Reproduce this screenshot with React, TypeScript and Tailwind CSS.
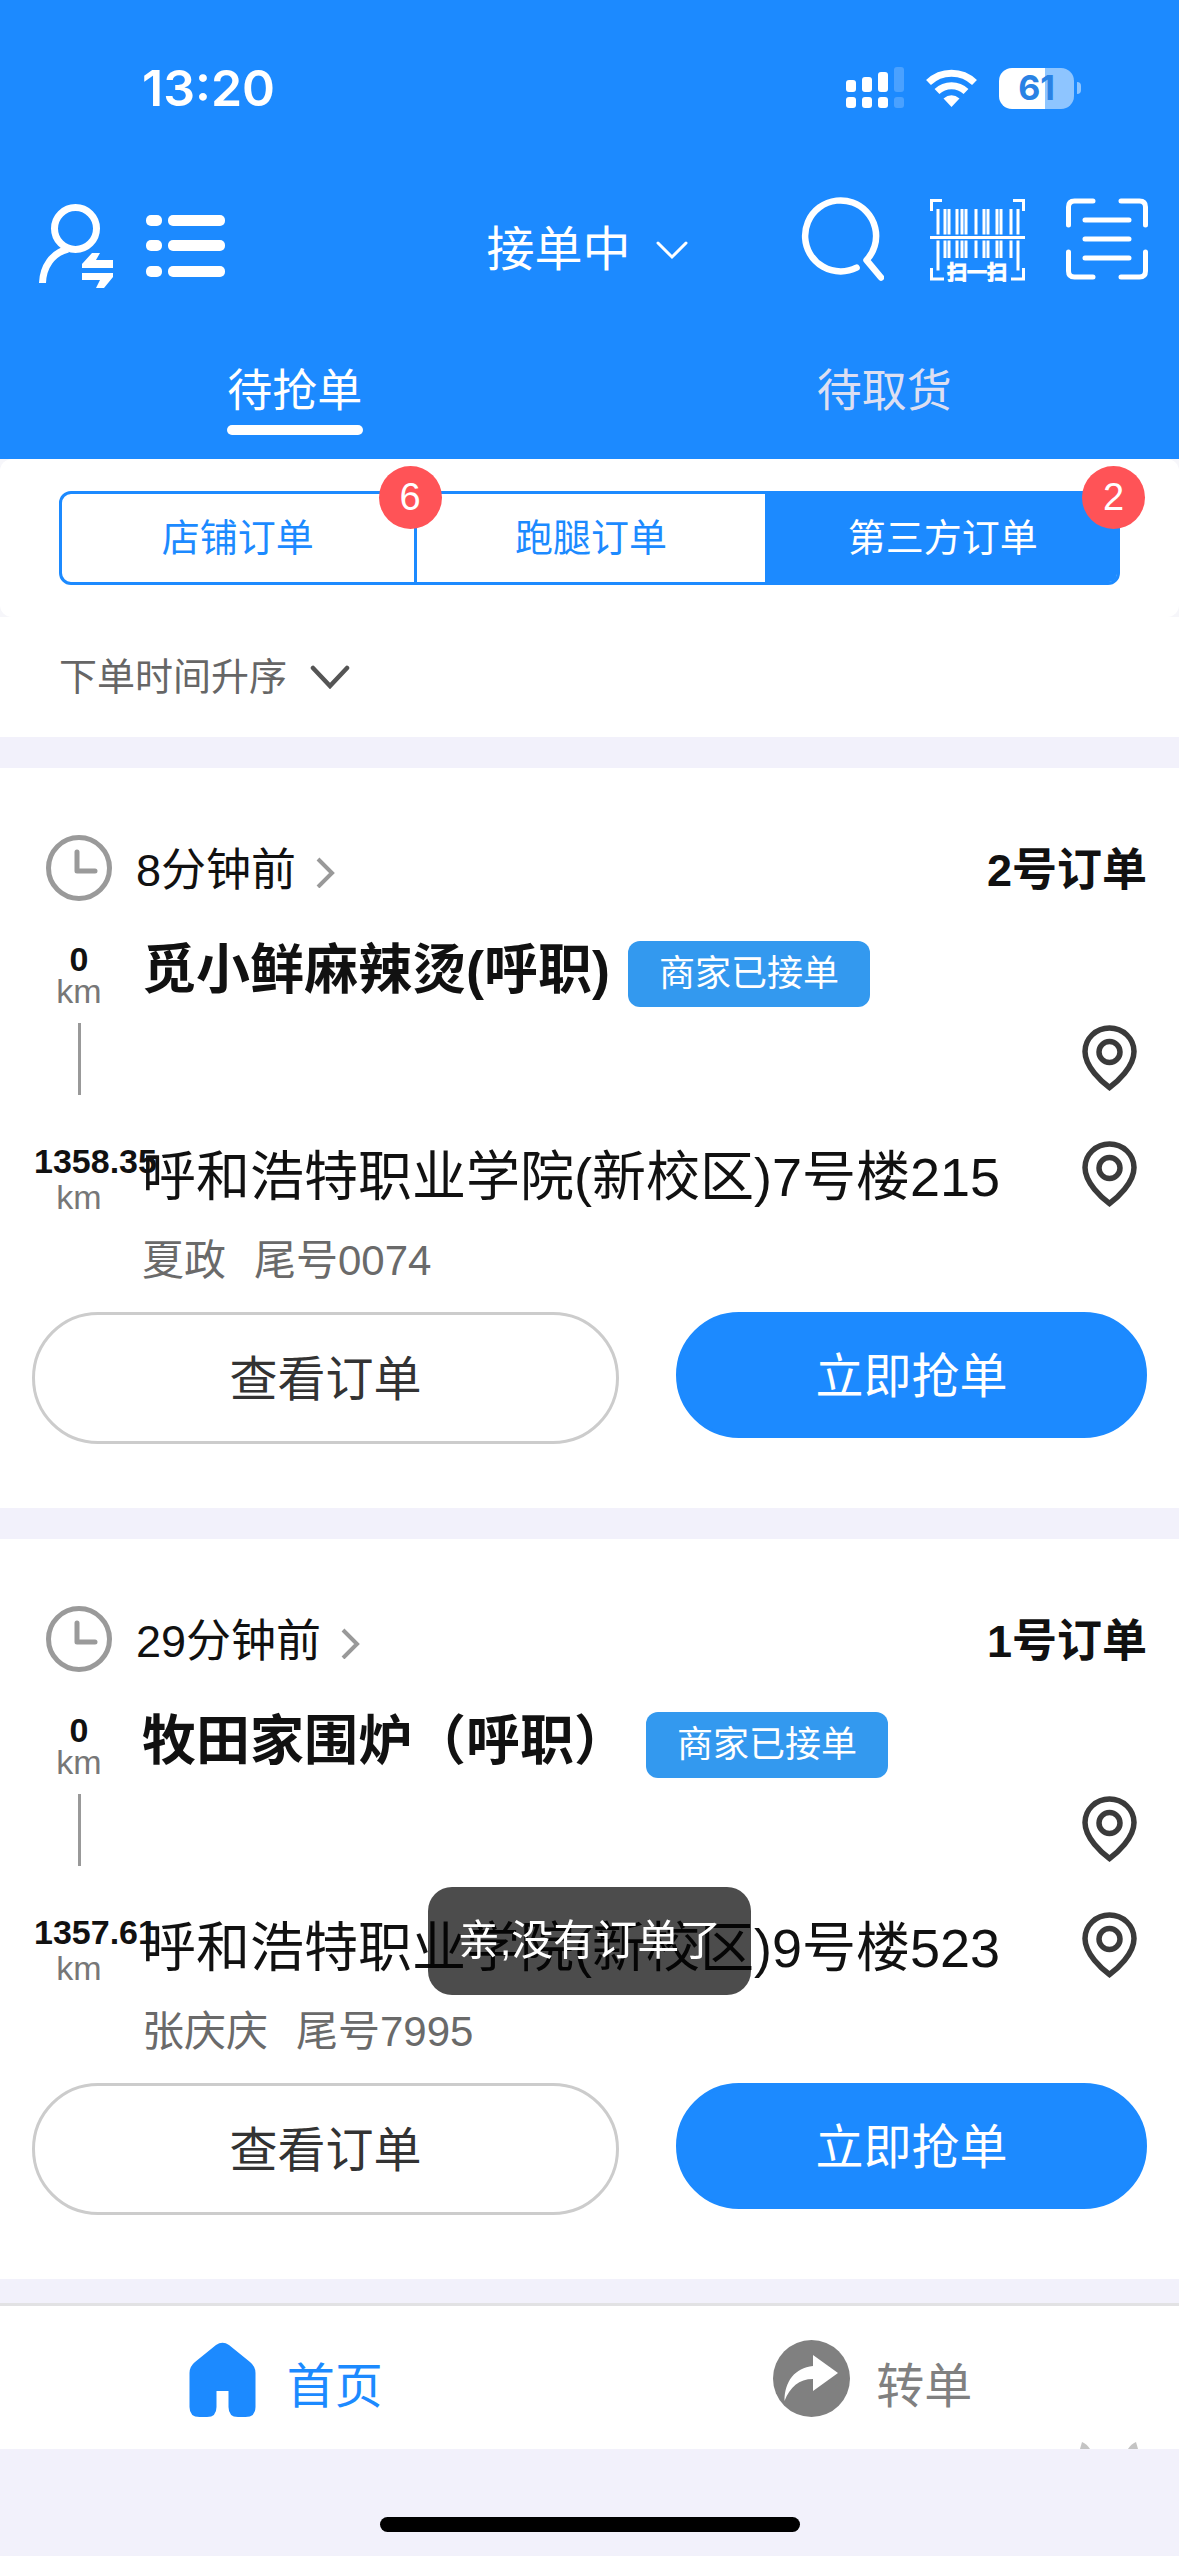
import { useState } from 'react';

const TABS = ['待抢单', '待取货'];

const CATEGORIES = [
    { label: '店铺订单', count: 6 },
    { label: '跑腿订单', count: 0 },
    { label: '第三方订单', count: 2 },
];

const ORDERS = [
    {
        id: 2,
        time: '8分钟前',
        shop: '觅小鲜麻辣烫(呼职)',
        status: '商家已接单',
        shopDistance: '0',
        distance: '1358.35',
        address: '呼和浩特职业学院(新校区)7号楼215',
        customer: '夏政',
        phone: '尾号0074',
    },
    {
        id: 1,
        time: '29分钟前',
        shop: '牧田家围炉（呼职）',
        status: '商家已接单',
        shopDistance: '0',
        distance: '1357.61',
        address: '呼和浩特职业学院(新校区)9号楼523',
        customer: '张庆庆',
        phone: '尾号7995',
    },
];

// x positions of the bars between the two outer ones
const BARCODE = [15, 19, 27, 32, 36, 46, 54, 58, 67, 71, 81];

function StatusBar() {
    return (
        <div className="flex h-44 items-center justify-between pl-[142px] pr-[98px]">
            <span className="font-[Inter] text-[50px] font-semibold leading-none">13:20</span>
            <div className="flex items-center gap-[22px]">
                <svg className="h-[42px] w-[58px]" viewBox="0 0 58 42" fill="currentColor">
                    <rect x="0" y="13" width="10" height="12" rx="3" />
                    <rect x="16" y="10" width="10" height="15" rx="3" />
                    <rect x="32" y="5" width="10" height="20" rx="3" />
                    <rect x="0" y="30" width="10" height="11" rx="3" />
                    <rect x="16" y="30" width="10" height="11" rx="3" />
                    <rect x="32" y="30" width="10" height="11" rx="3" />
                    <g opacity="0.2">
                        <rect x="48" y="0" width="10" height="25" rx="3" />
                        <rect x="48" y="30" width="10" height="11" rx="3" />
                    </g>
                </svg>
                <svg className="h-[38px] w-[51px]" viewBox="0 0 51 38" fill="none" stroke="currentColor" strokeWidth="7">
                    <path d="M2.5 13.5a33 33 0 0 1 46 0" />
                    <path d="M11 22.5a21 21 0 0 1 29 0" />
                    <path d="M25.5 38l-8-8.500q8-6.500 16 0z" fill="currentColor" stroke="none" />
                </svg>
                <div className="flex items-center gap-[3px]">
                    <div className="flex h-[41px] w-[75px] items-center justify-center rounded-[13px] bg-linear-to-r from-white from-62% to-[#8ec5ff] to-62%">
                        <span className="font-[Inter] text-[34px] font-bold leading-none text-[#2a82e4]">61</span>
                    </div>
                    <div className="h-3 w-1 rounded-r-full bg-[#8ec5ff]" />
                </div>
            </div>
        </div>
    );
}

function BarcodeIcon() {
    return (
        <svg className="h-[86px] w-[95px]" viewBox="0 0 95 86" fill="none" stroke="currentColor" strokeWidth="3">
            <path d="M1.500 15V4.500H12M83 4.500H93.500V15M1.500 72V83H14M81 83H93.500V72" />
            <path d="M0 41.500H95" />
            <path d="M8 13V38.500M88 13V38.500M8 44.500V74.500M88 44.500V74.500" />
            {BARCODE.map((x) => (
                <path key={x} d={`M${x} 13V38.500M${x} 44.500V62`} />
            ))}
            <text x="47" y="84" textAnchor="middle" className="fill-white text-[20px] font-bold" strokeWidth="1">
                扫一扫
            </text>
        </svg>
    );
}

function Header() {
    const [tab, setTab] = useState(0);

    return (
        <header className="bg-[#1c8aff] text-white">
            <StatusBar />

            <div className="grid h-36 grid-cols-[1fr_auto_1fr] items-center pl-[38px] pr-[31px]">
                <div className="flex items-center gap-8 pb-1">
                    <button aria-label="切换账号">
                        <svg className="h-[84px] w-[76px]" viewBox="0 0 76 84" fill="none" stroke="currentColor" strokeWidth="7">
                            <ellipse cx="37.500" cy="24.500" rx="21" ry="21" />
                            <path d="M30 45C14 49 5 63 4.500 79" />
                            <path d="M54 49h8l-4 7h17v8H44v-4zM44 69h31v4L66 84h-8l4-8H44z" fill="currentColor" stroke="none" />
                        </svg>
                    </button>
                    <button aria-label="列表">
                        <svg className="h-[62px] w-[79px]" viewBox="0 0 79 62" fill="currentColor">
                            <rect x="0" y="0" width="16" height="11" rx="5" />
                            <rect x="22" y="0" width="57" height="11" rx="5" />
                            <rect x="0" y="25" width="16" height="11" rx="5" />
                            <rect x="22" y="25" width="57" height="11" rx="5" />
                            <rect x="0" y="51" width="16" height="11" rx="5" />
                            <rect x="22" y="51" width="57" height="11" rx="5" />
                        </svg>
                    </button>
                </div>

                <label className="relative mr-3 mt-1 flex items-center">
                    <select aria-label="接单状态" className="h-16 appearance-none bg-transparent pr-14 text-[48px] leading-[64px] outline-none">
                        <option>接单中</option>
                        <option>休息中</option>
                    </select>
                    <svg className="pointer-events-none absolute right-0 h-5 w-8" viewBox="0 0 32 20" fill="none" stroke="currentColor" strokeWidth="3" strokeLinecap="round">
                        <path d="M2 3l14 14L30 3" />
                    </svg>
                </label>

                <div className="flex items-center justify-end pb-[18px]">
                    <button aria-label="搜索" className="mr-[46px]">
                        <svg className="h-[84px] w-[83px]" viewBox="0 0 83 84" fill="none" stroke="currentColor" strokeWidth="6.500" strokeLinecap="round" strokeLinejoin="round">
                            <path d="M55.600 70.600A35.500 35.500 0 1 1 65.500 63.200L80 80.500" />
                        </svg>
                    </button>
                    <button aria-label="扫一扫" className="mr-[41px]">
                        <BarcodeIcon />
                    </button>
                    <button aria-label="扫描">
                        <svg className="h-[82px] w-[82px]" viewBox="0 0 82 82" fill="none" stroke="currentColor" strokeWidth="5" strokeLinecap="round">
                            <path d="M2.500 27V9q0-6 6-6H27M55 3H73.500q6 0 6 6V27M79.500 54V73q0 6-6 6H55M27 79H8.500q-6 0-6-6V54" />
                            <path d="M19 22H63M19 41H63M19 60H63" />
                        </svg>
                    </button>
                </div>
            </div>

            <nav className="grid grid-cols-2">
                {TABS.map((label, i) => (
                    <button key={label} onClick={() => setTab(i)} className="flex flex-col items-center gap-[7px] pb-6 pt-[46px]">
                        <span className={`text-[45px] leading-[52px] ${tab === i ? '' : 'text-[#dcdff2]'}`}>{label}</span>
                        <span className={`h-[10px] w-[136px] rounded-full ${tab === i ? 'bg-white' : ''}`} />
                    </button>
                ))}
            </nav>
        </header>
    );
}

function Filters() {
    const [active, setActive] = useState(2);

    return (
        <section className="bg-[#f6f6fa]">
            <div className="rounded-xl bg-white px-[59px] py-8">
                <div className="grid h-[94px] grid-cols-3 rounded-xl border-3 border-[#1c8aff]">
                    {CATEGORIES.map((c, i) => (
                        <button
                            key={c.label}
                            onClick={() => setActive(i)}
                            className={`relative border-l-3 border-[#1c8aff] text-[38px] first:border-l-0 ${active === i ? 'bg-[#1c8aff] text-white last:rounded-r-lg' : 'text-[#1c8aff]'}`}
                        >
                            {c.label}
                            {c.count > 0 && (
                                <span className="absolute -right-7 -top-7 z-10 flex size-[63px] items-center justify-center rounded-full bg-[#ff5357] text-[38px] text-white">
                                    {c.count}
                                </span>
                            )}
                        </button>
                    ))}
                </div>
            </div>
            <div className="bg-white px-[59px] py-7">
                <label className="relative inline-flex items-center text-[#666]">
                    <select aria-label="排序" className="h-16 appearance-none bg-transparent pr-[62px] text-[38px] leading-[64px] outline-none">
                        <option>下单时间升序</option>
                        <option>下单时间降序</option>
                    </select>
                    <svg className="pointer-events-none absolute right-0 h-6 w-10" viewBox="0 0 40 24" fill="none" stroke="#555" strokeWidth="4.500" strokeLinecap="round">
                        <path d="M3 3l17 18L37 3" />
                    </svg>
                </label>
            </div>
        </section>
    );
}

function PinButton() {
    return (
        <button aria-label="导航" className="shrink-0 self-start">
            <svg className="h-[66px] w-[55px]" viewBox="0 0 55 66" fill="none" stroke="#3a3a3a" strokeWidth="5.500">
                <path d="M27.500 62.500C20 57 3 42 3 26.500a24.500 23.500 0 0 1 49 0C52 42 35 57 27.500 62.500z" />
                <circle cx="27.500" cy="27" r="10.500" />
            </svg>
        </button>
    );
}

function OrderCard({ order }: { order: (typeof ORDERS)[number] }) {
    return (
        <article className="bg-white pb-16 pt-[67px]">
            <div className="flex items-start justify-between pl-[46px] pr-8 text-[45px] leading-[72px] text-[#111]">
                <button className="flex items-start">
                    <svg className="mr-6 size-[66px]" viewBox="0 0 66 66" fill="none" stroke="#9a9a9a" strokeWidth="5" strokeLinecap="round" strokeLinejoin="round">
                        <circle cx="33" cy="33" r="30.500" />
                        <path d="M31 17V36H49" />
                    </svg>
                    {order.time}
                    <svg className="ml-5 mt-[21px] h-8 w-5" viewBox="0 0 20 32" fill="none" stroke="#999" strokeWidth="4">
                        <path d="M2 3l14 14L2 31" />
                    </svg>
                </button>
                <span className="font-bold">{order.id}号订单</span>
            </div>

            {/* Shop */}
            <div className="mt-[34px] flex h-[200px] gap-[18px] pl-[34px] pr-[42px]">
                <div className="w-[90px] shrink-0 pt-[2px] text-center text-[34px] leading-8">
                    <div className="font-bold text-[#111]">{order.shopDistance}</div>
                    <div className="text-[#777]">km</div>
                    <div className="mx-auto mt-4 h-[72px] w-[3px] bg-[#999]" />
                </div>
                <div className="flex min-w-0 flex-1 items-start gap-[18px]">
                    <h2 className="text-[54px] font-bold leading-[58px] text-[#111]">{order.shop}</h2>
                    <span className="rounded-xl bg-[#3399ef] px-[31px] text-[36px] leading-[66px] text-white">{order.status}</span>
                </div>
                <div className="pt-[84px]">
                    <PinButton />
                </div>
            </div>

            {/* Customer */}
            <div className="flex gap-[18px] pl-[34px] pr-[42px]">
                <div className="w-[90px] shrink-0 whitespace-nowrap pt-[2px] text-center text-[34px] leading-9">
                    <div className="font-bold text-[#111]">{order.distance}</div>
                    <div className="text-[#777]">km</div>
                </div>
                <div className="min-w-0 flex-1">
                    <p className="whitespace-nowrap text-[54px] leading-[72px] text-[#111]">{order.address}</p>
                    <p className="mt-[22px] flex gap-7 text-[42px] leading-[52px] text-[#6a6a6a]">
                        <span>{order.customer}</span>
                        <span>{order.phone}</span>
                    </p>
                </div>
                <PinButton />
            </div>

            <div className="mt-[25px] flex items-start gap-[57px] px-8 text-[48px]">
                <button className="h-[132px] flex-[5] rounded-full border-3 border-[#ccc] pt-1 text-[#333]">查看订单</button>
                <button className="h-[126px] flex-[4] rounded-full border-3 border-[#1c8aff] bg-[#1c8aff] pt-1 text-white">立即抢单</button>
            </div>
        </article>
    );
}

function TabBar() {
    return (
        <nav className="relative grid grid-cols-2 border-t-3 border-[#e2e2e4] bg-white text-[48px] leading-[60px]">
            <a href="#home" className="flex items-end justify-center gap-[26px] pb-8 pr-[23px] pt-[34px] text-[#1c8aff]">
                <svg className="size-[77px]" viewBox="0 0 77 77" fill="currentColor">
                    <path d="M32 5q6.500-4.500 13 0L66 22q5.500 4.500 5.500 11V67q0 10-10 10H54q-9.500 0-9.500-10V51H32.500V67q0 10-9.500 10H15.500q-10 0-10-10V33q0-6.500 5.500-11z" />
                </svg>
                首页
            </a>
            <a href="#transfer" className="flex items-end justify-center gap-[26px] pb-8 pr-[23px] pt-[34px] text-[#808080]">
                <svg className="size-[77px]" viewBox="0 0 77 77" fill="currentColor">
                    <circle cx="38.500" cy="38.500" r="38.500" />
                    <path d="M40 15L65 33 40 51V39C26 39 17 47 11.500 61 11.500 41 22 28 40 26z" fill="#fff" />
                </svg>
                转单
            </a>
            <svg className="absolute bottom-0 right-10 h-2 w-[60px]" viewBox="0 0 60 8" fill="#c4c4c4">
                <path d="M1 8L3 1Q8 3 11 8zM49 8Q52 3 57 1L59 8z" />
            </svg>
        </nav>
    );
}

export default function App() {
    return (
        <div className="relative min-h-screen bg-[#f2f1fb] font-['Liberation_Sans','Noto_Sans_CJK_SC',sans-serif]">
            <Header />
            <Filters />

            <main className="flex flex-col gap-[31px] pb-6 pt-[31px]">
                {ORDERS.map((order) => (
                    <OrderCard key={order.id} order={order} />
                ))}
            </main>

            <TabBar />
            <div className="pb-6 pt-[68px]">
                <div className="mx-auto h-[15px] w-[420px] rounded-full bg-black" />
            </div>

            {/* Toast */}
            <div role="status" className="fixed inset-x-0 bottom-[561px] z-20 flex justify-center">
                <div className="rounded-3xl bg-black/70 px-[30px] text-[42px] leading-[108px] text-white">亲,没有订单了</div>
            </div>
        </div>
    );
}
